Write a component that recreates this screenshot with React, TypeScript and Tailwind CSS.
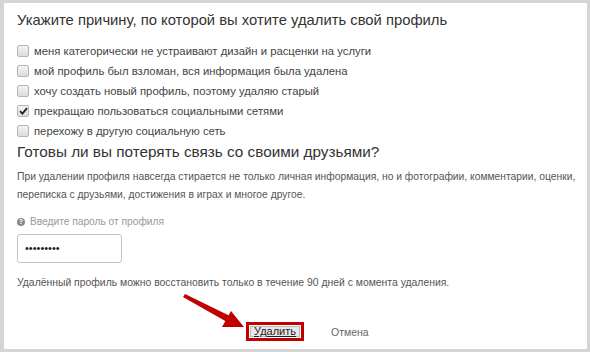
import { useState } from "react";

const reasons = [
  "меня категорически не устраивают дизайн и расценки на услуги",
  "мой профиль был взломан, вся информация была удалена",
  "хочу создать новый профиль, поэтому удаляю старый",
  "прекращаю пользоваться социальными сетями",
  "перехожу в другую социальную сеть",
];

function Box({ checked }: { checked: boolean }) {
  return (
    <span className="w-[12px] h-[12px] rounded-[2px] border border-[#b5b5b5] bg-gradient-to-b from-[#f4f4f4] to-[#dcdcdc] flex items-center justify-center shrink-0">
      {checked && (
        <svg width="9" height="8" viewBox="0 0 9 8">
          <path d="M1 4.2 L3.4 6.6 L8 1.2" fill="none" stroke="#222" strokeWidth="1.8" />
        </svg>
      )}
    </span>
  );
}

export default function App() {
  const [checked, setChecked] = useState(3);

  return (
    <div className="w-[590px] h-[352px] bg-[#d5d5d5] pt-[3px] pl-[4px] pr-[3px] pb-[3px] font-['Liberation_Sans',Arial,sans-serif]">
      <div className="relative h-full bg-white pl-[13px] pr-[8px] pt-[7px]">
        <h1 className="text-[14.8px] leading-[20px] text-[#333]">
          Укажите причину, по которой вы хотите удалить свой профиль
        </h1>

        <div className="mt-[11px] flex flex-col">
          {reasons.map((r, i) => (
            <label
              key={i}
              onClick={() => setChecked(i)}
              className="h-[20px] flex items-center gap-[5px] text-[11.3px] text-[#444] cursor-pointer"
            >
              <Box checked={checked === i} />
              <span>{r}</span>
            </label>
          ))}
        </div>

        <h2 className="mt-[1px] text-[15.3px] leading-[20px] text-[#333]">
          Готовы ли вы потерять связь со своими друзьями?
        </h2>

        <p className="mt-[6px] text-[10.3px] leading-[18px] text-[#555] whitespace-nowrap">
          При удалении профиля навсегда стирается не только личная информация, но и фотографии, комментарии, оценки,
          <br />
          переписка с друзьями, достижения в играх и многое другое.
        </p>

        <div className="mt-[9px] h-[18px] flex items-center gap-[5px] text-[10.2px] text-[#999]">
          <span className="w-[8px] h-[8px] rounded-full bg-[#888] text-white text-[7px] leading-[8px] font-bold flex items-center justify-center">
            ?
          </span>
          <span>Введите пароль от профиля</span>
        </div>

        <div className="mt-[3px] w-[105px] h-[29px] rounded-[3px] border border-[#c4c4c4] flex items-center pl-[7px] text-[11px] text-[#222]">
          •••••••••
        </div>

        <p className="mt-[11px] text-[10.4px] leading-[18px] text-[#555]">
          Удалённый профиль можно восстановить только в течение 90 дней с момента удаления.
        </p>

        <div className="mt-[30px] flex items-center">
          <div className="ml-[229px] flex border-[3px] border-[#c00000] p-[1px] bg-white">
            <button className="h-[11px] px-[3px] bg-[#e8e8e8] border border-[#bbb] text-[11px] leading-[9px] text-[#222] underline">
              Удалить
            </button>
          </div>
          <span className="ml-[27px] text-[10.5px] leading-[14px] text-[#666]">Отмена</span>
        </div>

        <svg
          className="absolute left-[176px] top-[290px]"
          width="70"
          height="40"
          viewBox="0 0 70 40"
        >
          <polygon points="3,4 5,1 50,23 47,29" fill="#c00000" />
          <polygon points="51,18 64,34 42,34" fill="#c00000" />
        </svg>
      </div>
    </div>
  );
}
